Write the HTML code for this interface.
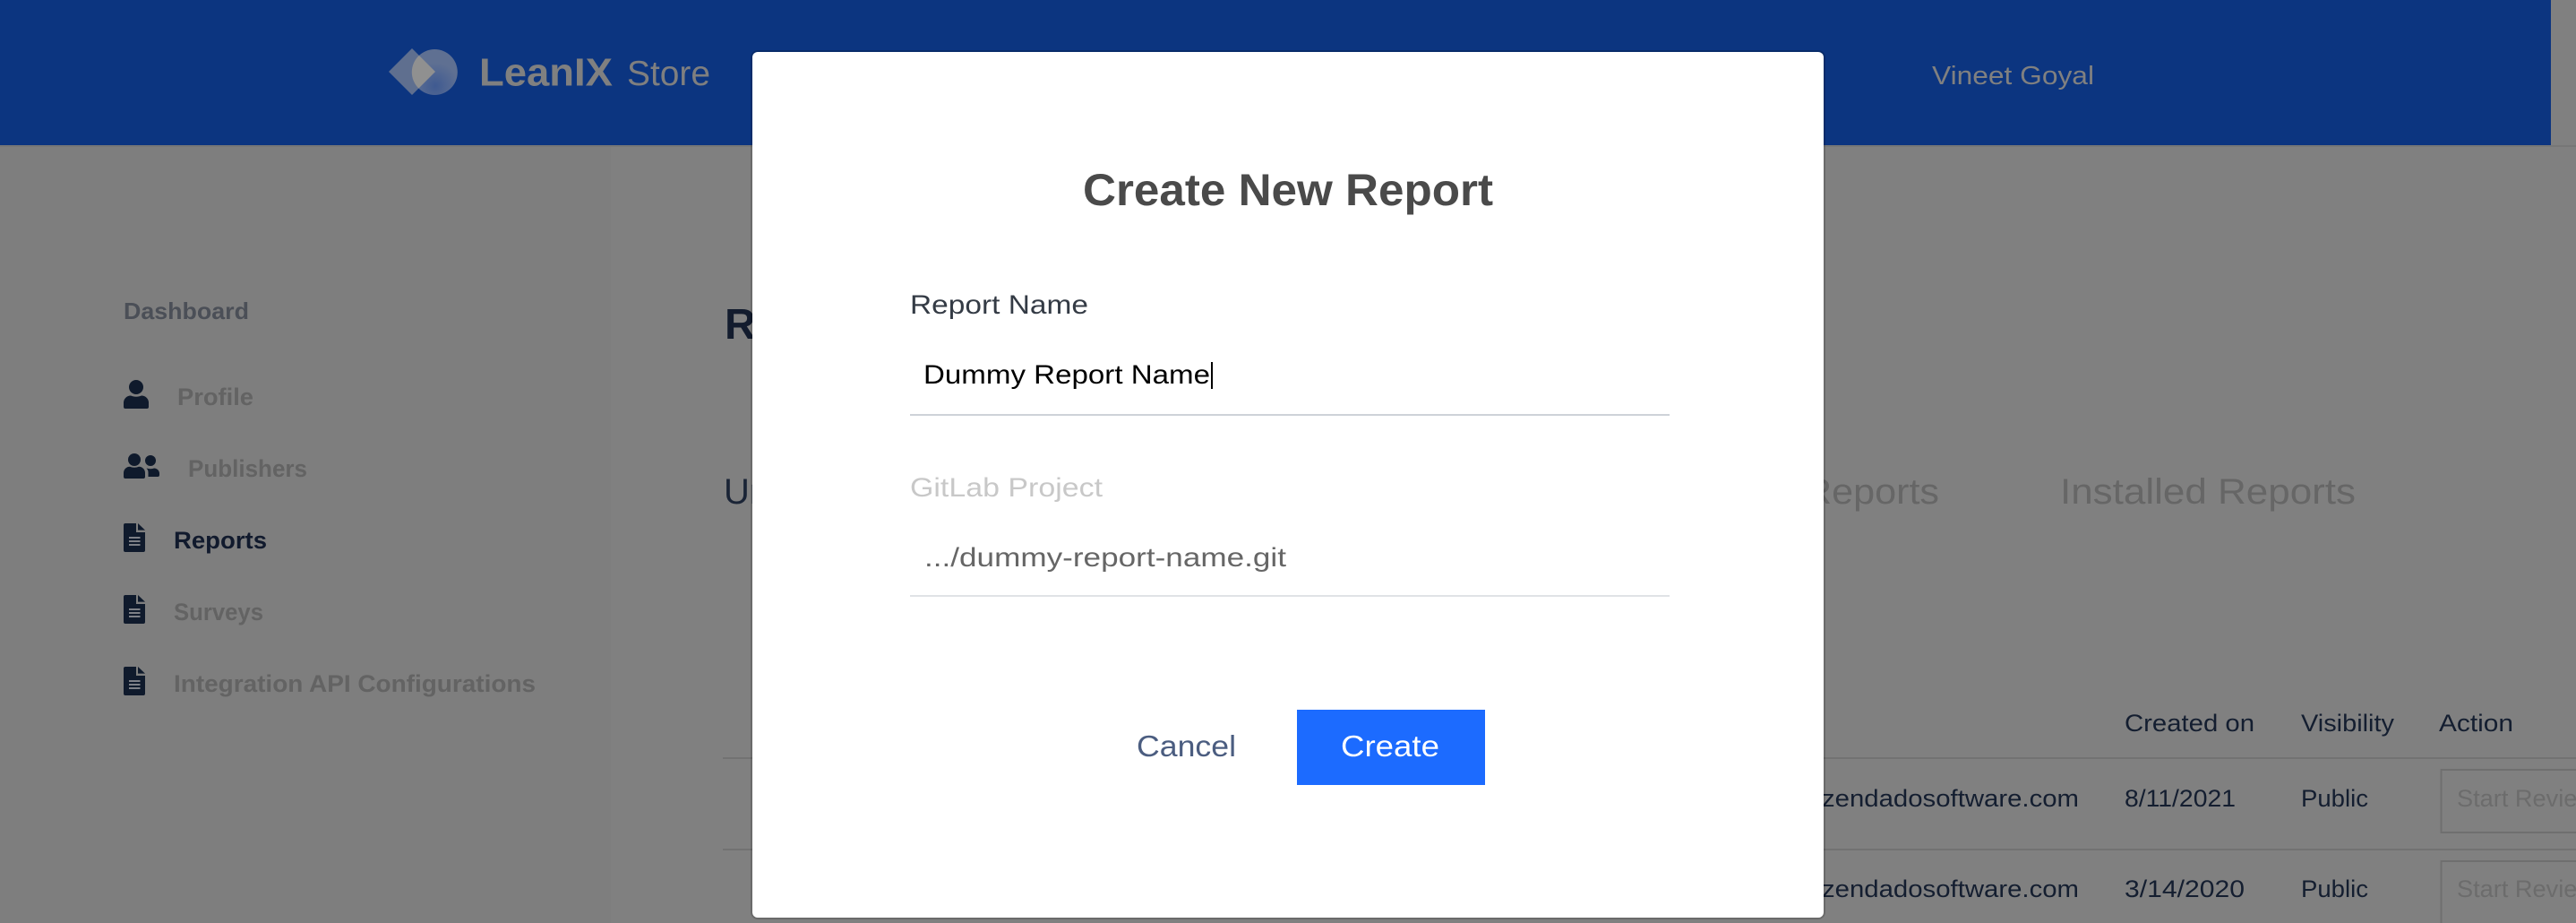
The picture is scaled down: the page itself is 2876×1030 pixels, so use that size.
<!DOCTYPE html>
<html lang="en">
<head>
<meta charset="utf-8">
<title>LeanIX Store - Create New Report</title>
<style>
html,body{margin:0;padding:0;width:2876px;height:1030px;overflow:hidden;background:#808080}
body{position:relative;font-family:"Liberation Sans",Arial,sans-serif}
svg{display:block;position:absolute;overflow:hidden}
svg text{font-family:"Liberation Sans",Arial,sans-serif}
.b{font-weight:700}
.page{position:absolute;left:0;top:0;width:2876px;height:1030px}
.modal{position:absolute;left:840px;top:58px;width:1196px;height:966px;background:#fff;border-radius:6px;box-shadow:0 0 0 2px rgba(0,0,0,.17);overflow:hidden}
</style>
</head>
<body>
<div class="page">
<svg width="2876" height="1030" viewBox="0 0 2876 1030">
  <defs>
    <radialGradient id="cg" gradientUnits="userSpaceOnUse" cx="486" cy="96" r="26">
      <stop offset="0" stop-color="#3f5a91"/>
      <stop offset="1" stop-color="#5f7092"/>
    </radialGradient>
    <clipPath id="dm"><polygon points="434,80 460,54 486,80 460,106"/></clipPath>
    <g id="doc">
      <path d="M140 0H152V10H162V30a2 2 0 0 1-2 2H140a2 2 0 0 1-2-2V2a2 2 0 0 1 2-2Z" fill="#0f1a2c"/>
      <polygon points="154,0 162,7.6 154,7.6" fill="#0f1a2c"/>
      <rect x="144" y="15" width="12.5" height="2" fill="#7d8087"/>
      <rect x="144" y="19" width="12.5" height="2" fill="#7d8087"/>
      <rect x="144" y="23" width="12.5" height="2" fill="#7d8087"/>
    </g>
  </defs>

  <!-- page background -->
  <rect x="0" y="0" width="2876" height="1030" fill="#808080"/>
  <rect x="0" y="164" width="682" height="866" fill="#7e7e7e"/>

  <!-- header -->
  <rect x="0" y="0" width="2848" height="162" fill="#0c3580"/>
  <rect x="0" y="162" width="2876" height="2" fill="#777777"/>
  <polygon points="434,80 460,54 486,80 460,106" fill="#5f6f8f"/>
  <circle cx="485.3" cy="80.5" r="25.5" fill="url(#cg)"/>
  <circle cx="485.3" cy="80.5" r="25.5" fill="#909090" clip-path="url(#dm)"/>
  <text class="b" x="535" y="95.5" font-size="44" textLength="149" lengthAdjust="spacingAndGlyphs" fill="#808080">LeanIX</text>
  <text x="700" y="95" font-size="39" textLength="93" lengthAdjust="spacingAndGlyphs" fill="#7f7f7f">Store</text>
  <text x="2157" y="94" font-size="29" textLength="181" lengthAdjust="spacingAndGlyphs" fill="#808080">Vineet Goyal</text>

  <!-- sidebar -->
  <text class="b" x="138" y="356" font-size="26" textLength="140" lengthAdjust="spacingAndGlyphs" fill="#4b4f57">Dashboard</text>

  <circle cx="152" cy="432" r="8" fill="#0f1a2c"/>
  <path d="M138 456V450a8 8 0 0 1 8-8.5c2 .8 3.6 1.2 6 1.2s4-.4 6-1.2a8 8 0 0 1 8 8.5v4a2 2 0 0 1-2 2H140a2 2 0 0 1-2-2Z" fill="#0f1a2c"/>
  <text class="b" x="198" y="452" font-size="27" textLength="85" lengthAdjust="spacingAndGlyphs" fill="#636363">Profile</text>

  <circle cx="150" cy="513" r="7" fill="#0f1a2c"/>
  <path d="M138 534V528a7 7 0 0 1 7-7.3c1.6 .6 3 1 5 1s3.4-.4 5-1a7 7 0 0 1 7 7.3v4a2 2 0 0 1-2 2H140a2 2 0 0 1-2-2Z" fill="#0f1a2c"/>
  <circle cx="168" cy="514" r="6" fill="#0f1a2c"/>
  <path d="M163.5 522.5c1.5 .4 3 .7 4.5 .7 1.8 0 3-.3 4-.7a6 6 0 0 1 6 6v1.5a2 2 0 0 1-2 2h-10.5V527c0-1.8-.8-3.2-2-4.5Z" fill="#0f1a2c"/>
  <text class="b" x="210" y="532" font-size="27" textLength="133" lengthAdjust="spacingAndGlyphs" fill="#636363">Publishers</text>

  <use href="#doc" transform="translate(0,584)"/>
  <text class="b" x="194" y="612" font-size="27" textLength="104" lengthAdjust="spacingAndGlyphs" fill="#111a2d">Reports</text>

  <use href="#doc" transform="translate(0,664)"/>
  <text class="b" x="194" y="692" font-size="27" textLength="100" lengthAdjust="spacingAndGlyphs" fill="#636363">Surveys</text>

  <use href="#doc" transform="translate(0,744)"/>
  <text class="b" x="194" y="772" font-size="27" textLength="404" lengthAdjust="spacingAndGlyphs" fill="#636363">Integration API Configurations</text>

  <!-- main -->
  <text class="b" x="809" y="378" font-size="48" fill="#131c2e">Reports</text>
  <text x="808" y="562" font-size="40" fill="#1a2436">Unpublished</text>
  <text x="2014" y="562" font-size="40" textLength="151" lengthAdjust="spacingAndGlyphs" fill="#666666">Reports</text>
  <text x="2300" y="562" font-size="40" textLength="330" lengthAdjust="spacingAndGlyphs" fill="#666666">Installed Reports</text>

  <!-- table -->
  <text x="2372" y="816" font-size="27" textLength="145" lengthAdjust="spacingAndGlyphs" fill="#141e30">Created on</text>
  <text x="2569" y="816" font-size="27" textLength="104" lengthAdjust="spacingAndGlyphs" fill="#141e30">Visibility</text>
  <text x="2723" y="816" font-size="27" textLength="83" lengthAdjust="spacingAndGlyphs" fill="#141e30">Action</text>
  <rect x="807" y="845" width="2069" height="2" fill="#727272"/>
  <rect x="807" y="947" width="2069" height="2" fill="#727272"/>

  <text x="2034" y="900" font-size="27" textLength="287" lengthAdjust="spacingAndGlyphs" fill="#141e30">zendadosoftware.com</text>
  <text x="2372" y="900" font-size="27" textLength="124" lengthAdjust="spacingAndGlyphs" fill="#141e30">8/11/2021</text>
  <text x="2569" y="900" font-size="27" textLength="75" lengthAdjust="spacingAndGlyphs" fill="#141e30">Public</text>
  <rect x="2725.5" y="859" width="200" height="70" fill="none" stroke="#6f6f6f" stroke-width="2"/>
  <text x="2743" y="900" font-size="27" textLength="154" lengthAdjust="spacingAndGlyphs" fill="#6c6c6c">Start Review</text>

  <text x="2034" y="1001" font-size="27" textLength="287" lengthAdjust="spacingAndGlyphs" fill="#141e30">zendadosoftware.com</text>
  <text x="2372" y="1001" font-size="27" textLength="134" lengthAdjust="spacingAndGlyphs" fill="#141e30">3/14/2020</text>
  <text x="2569" y="1001" font-size="27" textLength="75" lengthAdjust="spacingAndGlyphs" fill="#141e30">Public</text>
  <rect x="2725.5" y="961" width="200" height="70" fill="none" stroke="#6f6f6f" stroke-width="2"/>
  <text x="2743" y="1001" font-size="27" textLength="154" lengthAdjust="spacingAndGlyphs" fill="#6c6c6c">Start Review</text>
</svg>
</div>

<div class="modal">
<svg width="1196" height="966" viewBox="840 58 1196 966" style="left:0;top:0">
  <text class="b" x="1209" y="229" font-size="50" textLength="458" lengthAdjust="spacingAndGlyphs" fill="#4a4a4a">Create New Report</text>

  <text x="1016" y="350" font-size="30" textLength="199" lengthAdjust="spacingAndGlyphs" fill="#343b45">Report Name</text>
  <text x="1031" y="428" font-size="30" textLength="320" lengthAdjust="spacingAndGlyphs" fill="#000000">Dummy Report Name</text>
  <rect x="1352" y="404" width="2" height="30" fill="#000000"/>
  <rect x="1016" y="462" width="848" height="2" fill="#ced2d8"/>

  <text x="1016" y="554" font-size="30" textLength="215" lengthAdjust="spacingAndGlyphs" fill="#c8c8c8">GitLab Project</text>
  <text x="1032" y="632" font-size="30" textLength="404" lengthAdjust="spacingAndGlyphs" fill="#666666">.../dummy-report-name.git</text>
  <rect x="1016" y="664" width="848" height="2" fill="#e0e3e6"/>

  <text x="1269" y="844" font-size="33" textLength="111" lengthAdjust="spacingAndGlyphs" fill="#4b5d80">Cancel</text>
  <rect x="1448" y="792" width="210" height="84" fill="#1c6bff"/>
  <text x="1497" y="844" font-size="33" textLength="110" lengthAdjust="spacingAndGlyphs" fill="#ffffff">Create</text>
</svg>
</div>
</body>
</html>
